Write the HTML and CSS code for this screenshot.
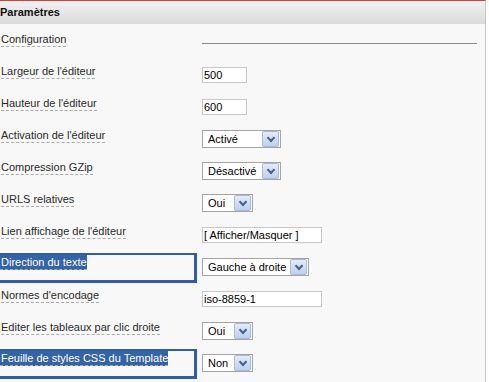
FILE: index.html
```html
<!DOCTYPE html>
<html lang="fr">
<head>
  <meta charset="UTF-8" />
  <title>Paramètres</title>
  <link rel="stylesheet" href="styles.css">
</head>
<body>

  <div class="panel">
    <!-- Header bar -->
    <div class="panel-head">Paramètres</div>

    <div class="panel-body">
      <div class="row">
        <div class="label-cell"><span class="label">Configuration</span></div>
        <div class="field"><div class="rule"></div></div>
      </div>

      <div class="row">
        <div class="label-cell"><span class="label">Largeur de l'éditeur</span></div>
        <div class="field"><input class="text small" type="text" value="500"></div>
      </div>

      <div class="row">
        <div class="label-cell"><span class="label">Hauteur de l'éditeur</span></div>
        <div class="field"><input class="text small" type="text" value="600"></div>
      </div>

      <div class="row">
        <div class="label-cell"><span class="label">Activation de l'éditeur</span></div>
        <div class="field">
          <div class="select w-mid"><span class="value">Activé</span><span class="arrow"></span></div>
        </div>
      </div>

      <div class="row">
        <div class="label-cell"><span class="label">Compression GZip</span></div>
        <div class="field">
          <div class="select w-mid"><span class="value">Désactivé</span><span class="arrow"></span></div>
        </div>
      </div>

      <div class="row">
        <div class="label-cell"><span class="label">URLS relatives</span></div>
        <div class="field">
          <div class="select w-short"><span class="value">Oui</span><span class="arrow"></span></div>
        </div>
      </div>

      <div class="row">
        <div class="label-cell"><span class="label">Lien affichage de l'éditeur</span></div>
        <div class="field"><input class="text wide" type="text" value="[ Afficher/Masquer ]"></div>
      </div>

      <div class="row marked">
        <div class="label-cell"><span class="label">Direction du texte</span></div>
        <div class="field">
          <div class="select w-long"><span class="value">Gauche à droite</span><span class="arrow"></span></div>
        </div>
      </div>

      <div class="row">
        <div class="label-cell"><span class="label">Normes d'encodage</span></div>
        <div class="field"><input class="text wide" type="text" value="iso-8859-1"></div>
      </div>

      <div class="row">
        <div class="label-cell"><span class="label">Editer les tableaux par clic droite</span></div>
        <div class="field">
          <div class="select w-short"><span class="value">Oui</span><span class="arrow"></span></div>
        </div>
      </div>

      <div class="row marked">
        <div class="label-cell"><span class="label">Feuille de styles CSS du Template</span></div>
        <div class="field">
          <div class="select w-short"><span class="value">Non</span><span class="arrow"></span></div>
        </div>
      </div>
    </div>
  </div>

</body>
</html>
```

FILE: styles.css
```css
* {
  box-sizing: border-box;
}

html, body {
  margin: 0;
  padding: 0;
  background: #ffffff;
  font-family: "Liberation Sans", Arial, sans-serif;
  font-size: 11px;
  color: #2a2a2a;
  overflow: hidden;
}

.panel {
  width: 486px;
  height: 382px;
  background: #f8f8f8;
  border-top: 1px solid #c9463a;
  border-right: 1px solid #c8c8c8;
}

/* Header bar */
.panel-head {
  height: 23px;
  line-height: 23px;
  padding-left: 0;
  font-weight: bold;
  color: #111;
  background: linear-gradient(#f2f2f2, #dadada);
}

.panel-body {
  padding-top: 3px;
}

.row {
  display: flex;
  align-items: center;
  height: 32px;
}

.label-cell {
  width: 202px;
  flex: 0 0 202px;
  padding-left: 1px;
  margin-bottom: 7px;
}

.label {
  display: inline-block;
  line-height: 13px;
  border-bottom: 1px dashed #aaa;
}

/* Annotated rows */
.row.marked .label-cell {
  align-self: stretch;
  margin: 2px 5px 0 -4px;
  flex-basis: 201px;
  width: 201px;
  padding: 0 0 0 2px;
  border: 2px solid #2f5ea6;
  border-right-width: 3px;
  border-bottom-width: 3px;
}

.row.marked .label {
  padding: 1px 0 0 1px;
  background: #3463a8;
  color: #fff;
}

.field {
  flex: 1;
  display: flex;
  align-items: center;
}

.rule {
  width: 275px;
  height: 1px;
  background: #8a8a8a;
}

.text {
  height: 16px;
  padding: 0 1px;
  margin: 0;
  border: 1px solid #c8c8c8;
  background: #fff;
  font-family: "Liberation Sans", Arial, sans-serif;
  font-size: 11px;
  color: #000;
  outline: none;
}

.text.small { width: 45px; }
.text.wide { width: 120px; }

/* Custom select box */
.select {
  display: flex;
  align-items: center;
  justify-content: space-between;
  height: 18px;
  padding: 0 1px 0 5px;
  border: 1px solid #a5a5a5;
  background: #fff;
  color: #000;
}

.w-short { width: 51px; }
.w-mid { width: 79px; }
.w-long { width: 107px; }

.arrow {
  position: relative;
  width: 17px;
  height: 16px;
  border: 1px solid #a8bbdc;
  border-radius: 2px;
  background: linear-gradient(#e4ecf8, #bcd0ee);
}

.arrow::after {
  content: "";
  position: absolute;
  left: 5px;
  top: 3px;
  width: 4px;
  height: 4px;
  border-right: 2px solid #4c5f85;
  border-bottom: 2px solid #4c5f85;
  transform: rotate(45deg);
}
```
